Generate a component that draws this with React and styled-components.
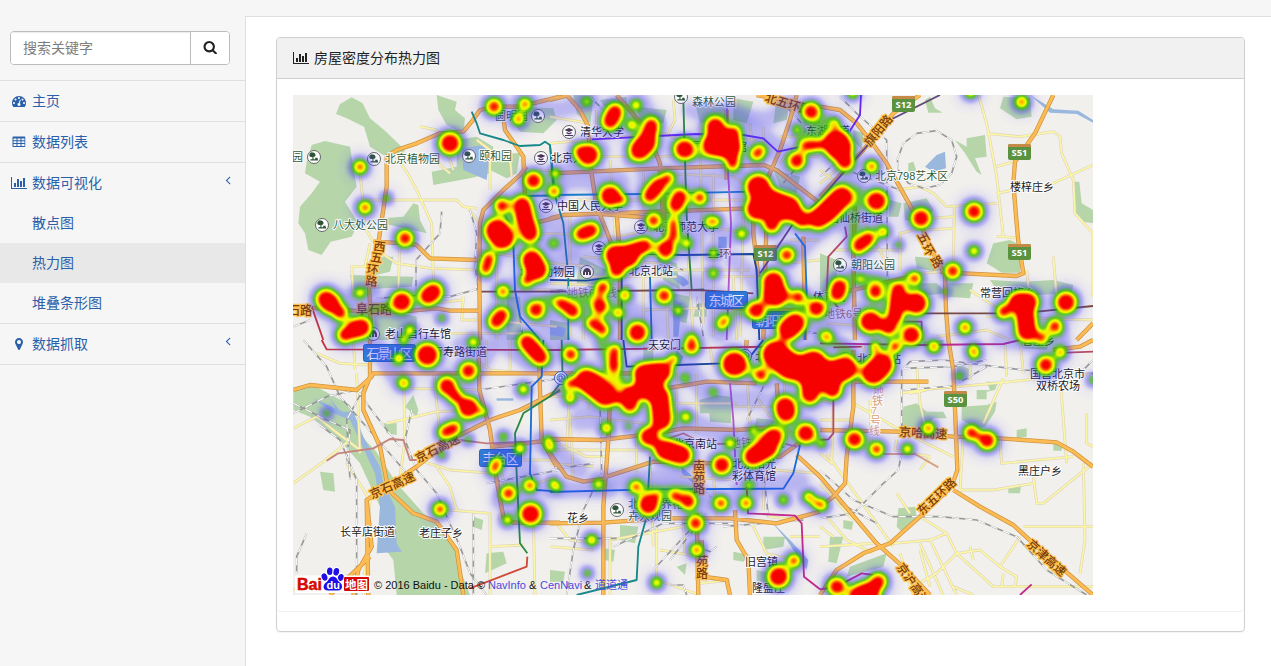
import React from 'react';
import styled, { createGlobalStyle } from 'styled-components';

const Global = createGlobalStyle`
  * { box-sizing: border-box; }
  body {
    margin: 0;
    background: #f6f6f6;
    font: 14px/20px "Liberation Sans", "Noto Sans CJK SC", sans-serif;
    color: #222;
    overflow: hidden;
  }
`;

const Page = styled.div`
  display: flex;
  height: 666px;
  padding-top: 16px;
  background: #f6f6f6;
`;
const Sidebar = styled.aside`
  width: 245px;
  flex: none;
`;
const SearchBar = styled.div`
  padding: 15px 15px 15px 10px;
  height: 65px;
  border-bottom: 1px solid #dfdfdf;
`;
const SearchGroup = styled.div`
  display: flex;
  height: 34px;
  border: 1px solid #bcbcbc;
  border-radius: 4px;
  background: #fff;
  overflow: hidden;
`;
const SearchInput = styled.input`
  flex: 1;
  min-width: 0;
  border: 0;
  outline: 0;
  padding: 0 12px;
  font: 14px "Liberation Sans", "Noto Sans CJK SC", sans-serif;
  box-shadow: inset 0 1px 1px rgba(0, 0, 0, 0.08);
  &::placeholder { color: #7d7d7d; opacity: 1; }
`;
const SearchButton = styled.button`
  width: 39px;
  padding: 0 0 2px;
  border: 0;
  border-left: 1px solid #bcbcbc;
  background: #fff;
  color: #222;
  display: flex;
  align-items: center;
  justify-content: center;
`;
const NavGroup = styled.div`
  border-bottom: 1px solid #dfdfdf;
`;
const NavItem = styled.a`
  display: flex;
  align-items: center;
  height: 40px;
  padding: 0 10px 0 ${(p) => (p.$sub ? 32 : 10)}px;
  color: #2a60aa;
  background: ${(p) => (p.$active ? '#e8e8e8' : 'transparent')};
`;
const NavIcon = styled.span`
  width: 18px;
  margin-right: 4px;
  display: flex;
  justify-content: center;
`;
const Arrow = styled.span`
  margin-left: auto;
  display: flex;
  padding-bottom: 6px;
`;
const Main = styled.main`
  flex: 1;
  background: #fff;
  border: solid #dfdfdf;
  border-width: 1px 0 0 1px;
  padding: 20px 26px 0 30px;
`;
const Panel = styled.section`
  height: 595px;
  border: 1px solid #d0d0d0;
  border-radius: 4px;
  box-shadow: 0 1px 1px rgba(0, 0, 0, 0.05);
  overflow: hidden;
`;
const PanelHeading = styled.header`
  display: flex;
  align-items: center;
  gap: 5px;
  height: 41px;
  padding: 0 16px;
  background: #f1f1f1;
  border-bottom: 1px solid #d0d0d0;
`;
const PanelBody = styled.div`
  height: 533px;
  padding: 16px;
  border-bottom: 1px solid #f0f0f0;
  border-radius: 0 0 4px 4px;
`;
const MapSvg = styled.svg`
  display: block;
  font-family: "Liberation Sans", "Noto Sans CJK SC", sans-serif;
`;

const ICONS = {
  dash: [1792, 'M384 1152q0-53-37.5-90.5t-90.5-37.5-90.5 37.5-37.5 90.5 37.5 90.5 90.5 37.5 90.5-37.5 37.5-90.5zm192-448q0-53-37.5-90.5t-90.5-37.5-90.5 37.5-37.5 90.5 37.5 90.5 90.5 37.5 90.5-37.5 37.5-90.5zm428 481l101-382q6-26-7.5-48.5t-38.5-29.5-48 6.5-30 39.5l-101 382q-60 5-107 43.5t-63 98.5q-20 77 20 146t117 89 146-20 89-117q16-60-6-117t-72-91zm660-33q0-53-37.5-90.5t-90.5-37.5-90.5 37.5-37.5 90.5 37.5 90.5 90.5 37.5 90.5-37.5 37.5-90.5zm-640-640q0-53-37.5-90.5t-90.5-37.5-90.5 37.5-37.5 90.5 37.5 90.5 90.5 37.5 90.5-37.5 37.5-90.5zm448 192q0-53-37.5-90.5t-90.5-37.5-90.5 37.5-37.5 90.5 37.5 90.5 90.5 37.5 90.5-37.5 37.5-90.5zm320 448q0 261-141 483-19 29-54 29h-1402q-35 0-54-29-141-221-141-483 0-182 71-348t191-286 286-191 348-71 348 71 286 191 191 286 71 348z'],
  chart: [2048, 'M640 896v512h-256v-512h256zm384-512v1024h-256v-1024h256zm1024 1152v128h-2048v-1536h128v1408h1920zm-640-896v768h-256v-768h256zm384-384v1152h-256v-1152h256z'],
  marker: [1792, 'M1152 640q0-106-75-181t-181-75-181 75-75 181 75 181 181 75 181-75 75-181zm256 0q0 109-33 179l-364 774q-16 33-47.5 52t-67.5 19-67.5-19-46.5-52l-365-774q-33-70-33-179 0-212 150-362t362-150 362 150 150 362z'],
  search: [1792, 'M1216 832q0-185-131.5-316.5t-316.5-131.5-316.5 131.5-131.5 316.5 131.5 316.5 316.5 131.5 316.5-131.5 131.5-316.5zm512 832q0 52-38 90t-90 38q-54 0-90-38l-343-342q-179 124-399 124-143 0-273.5-55.5t-225-150-150-225-55.5-273.5 55.5-273.5 150-225 225-150 273.5-55.5 273.5 55.5 225 150 150 225 55.5 273.5q0 220-124 399l343 343q37 37 37 90z'],
  angle: [1792, 'M1203 544q0 13-10 23l-393 393 393 393q10 10 10 23t-10 23l-50 50q-10 10-23 10t-23-10l-466-466q-10-10-10-23t10-23l466-466q10-10 23-10t23 10l50 50q10 10 10 23z'],
  table: [1792, 'M64 288q0-96 96-96h1440q96 0 96 96v1152q0 96-96 96h-1440q-96 0-96-96zM192 448v224h384v-224zM704 448v224h384v-224zM1216 448v224h384v-224zM192 800v224h384v-224zM704 800v224h384v-224zM1216 800v224h384v-224zM192 1152v256h384v-256zM704 1152v256h384v-256zM1216 1152v256h384v-256z'],
};
const Icon = ({ name, size = 14 }) => {
  const [w, d] = ICONS[name];
  return (
    <svg width={(size * w) / 1792} height={size} viewBox={`0 0 ${w} 1792`} fill="currentColor" fillRule={name === 'table' ? 'evenodd' : 'nonzero'}>
      <path d={d} />
    </svg>
  );
};

/* Map tiles: coordinates inside each tile are at three units per pixel. */
const TILES = [
  {
    x: 290, y: 90,
    parks: ['138,72 150,42 185,22 218,40 240,85 285,122 345,180 330,205 280,195 240,170 222,110 170,85', '50,215 65,165 105,153 180,170 200,290 165,335 205,400 185,440 122,455 95,495 55,480 45,430 25,400 30,350 65,310 90,275 45,250', '440,15 500,35 495,60 525,85 520,130 470,105 445,60', '690,50 790,55 800,90 760,130 690,125 665,90', '600,190 690,190 680,250 650,265 600,240', '500,150 560,140 610,170 600,250 540,265 430,285 425,245 500,230', '370,340 385,345 390,390 410,430 300,405 265,400 275,385 340,380', '180,555 370,560 365,590 190,600', '250,500 310,500 300,545 235,560', '650,620 690,620 700,750 650,750', '250,670 310,665 380,680 380,750 260,750'],
    water: ['515,175 580,165 598,200 590,270 520,240', '660,400 700,395 750,410 750,450 665,450', '690,60 720,55 710,90 690,90'],
    minor: ['390,110 440,120 480,210 490,240', '210,240 218,330 225,415 250,455', '310,190 350,245 380,300 425,400 430,560 440,600', '218,330 500,330 520,350 560,355', '330,460 325,600 320,640', '190,620 185,530 225,530 240,460', '440,200 450,225 480,250', '600,300 600,180 560,150', '530,350 570,400', '260,480 320,520 420,535 570,540', '620,350 620,750', '520,620 515,690 570,690', '240,640 235,750', '690,600 800,600', '560,480 800,520', '570,440 800,430', '420,640 520,630', '430,730 700,730', '700,320 810,315', '750,240 810,245', '590,690 800,710', '660,200 665,260'],
    main: ['10,650 190,662 330,665 440,655 480,662 570,662', '245,750 240,640 235,560 265,460 290,290 290,200 320,180 380,160 450,130 520,125 545,95 570,60 615,50 690,50 810,20', '250,455 350,460 380,465 420,505 560,510 620,490', '570,750 568,560 570,400 580,360 640,300 690,255 710,230', '638,65 645,120 680,170 700,200 705,320', '700,320 730,400 810,380'],
    rail: ['378,610 378,510 450,430 455,365', '540,360 560,430 555,520 565,600', '260,625 400,615 480,620 570,595', '10,710 60,690', '680,620 700,750'],
    subway: [['#16888a', '545,65 560,100 570,130 640,150 690,168 750,165 765,155 780,165 795,310 810,320'], ['#1470d8', '640,370 665,410 670,460 675,600 690,680 750,750'], ['#c33540', '65,650 100,750'], ['#7a4a3c', '575,605 810,605'], ['#1680b8', '650,345 700,318 810,316']],
  },
  {
    x: 290, y: 340,
    parks: ['10,145 60,130 180,195 215,290 255,330 320,430 400,520 450,560 500,620 515,700 540,765 320,765 310,660 265,600 270,500 210,370 140,290 60,230 10,210', '90,395 130,400 135,455 100,450', '280,250 320,250 320,285 290,280', '370,165 385,210 380,230 345,200', '550,530 580,540 575,570 550,560', '590,640 640,635 650,670 585,700'],
    water: ['70,175 160,215 190,215 220,290 270,380 280,430 315,500 320,610 335,635 260,640 270,500 255,400 180,240 130,220', '620,175 670,175 670,182 620,182', '115,170 165,230 150,225'],
    minor: ['10,265 80,230 130,270 210,330', '10,430 100,365 180,300', '170,370 240,480 220,765', '340,90 345,300 330,410', '360,145 560,150', '290,250 440,215 560,210', '380,360 450,380 480,390 610,400', '440,380 480,440 500,510', '480,510 600,520 600,765', '80,40 150,70 240,75', '200,100 210,340', '560,60 600,90 720,100', '600,620 700,615', '630,420 630,540', '620,470 800,410', '590,0 590,80', '430,90 450,280', '600,290 650,450', '10,750 200,700', '700,360 800,360', '660,0 660,90', '730,540 735,765', '190,0 195,90'],
    main: ['10,150 60,135 200,150 245,110 250,100 810,100', '240,0 240,110 220,160 220,210 270,320 295,450 370,520 440,545 500,630 520,765', '190,765 205,690 245,620 230,480 380,380 480,300 600,240 690,210 810,150', '565,0 568,150 600,270 620,420 640,530 670,548 810,548', '745,0 755,300 800,380', '610,320 810,298', '120,765 240,650', '230,480 235,765'],
    rail: ['40,0 110,80 150,170 290,330 350,400', '10,190 110,240 180,270 170,370', '90,255 150,300 200,420 200,765', '365,210 345,300 380,390 440,460 510,620 540,700 590,765', '10,220 110,170 200,150 260,230 330,320', '50,580 20,650 20,700', '240,110 170,240 180,420', '565,150 810,115', '590,430 700,410 810,390', '550,520 550,765'],
    subway: [['#c33540', '95,0 110,28 810,30'], ['#c8827c', '110,362 145,340 250,325 300,297 340,300 360,360 380,360'], ['#c8827c', '510,300 590,310 720,305'], ['#2b8a3c', '810,150 700,220 675,280 680,400 690,610 712,640'], ['#cf4b38', '712,650 710,680 540,745'], ['#1670d0', '760,0 755,110 725,140 720,400 740,450 810,455']],
  },
  {
    x: 550, y: 90,
    parks: ['70,15 130,20 120,110 80,70', '150,30 230,20 230,50 170,60', '260,50 350,60 340,100 270,90', '430,20 530,50 530,80 450,100', '550,25 610,35 590,100 550,90', '680,20 720,30 710,90 670,100', '670,240 750,260 740,310 690,290', '320,500 380,520 390,600 340,570', '370,610 420,620 410,700 370,690', '0,690 60,700 60,750 0,750', '760,40 810,40 810,130 760,130', '440,640 470,640 470,680 430,680', '90,500 170,540 140,600 80,580'],
    water: ['345,540 400,560 420,580 400,590 350,550', '370,630 395,640 385,740 370,740', '505,440 530,440 530,490 505,490', '0,705 50,715 40,740 0,735'],
    minor: ['0,160 340,130 500,190', '20,200 350,200 500,170', '370,30 375,90 350,140', '140,60 140,230', '80,330 600,330', '180,210 200,500', '280,240 280,700', '320,250 550,260 610,300', '450,100 460,700', '0,430 200,440 400,400 600,430', '340,540 600,540', '490,250 490,740', '520,560 620,560', '430,150 620,150', '600,100 610,200', '100,500 330,520', '60,380 60,740', '100,560 380,560', '280,660 600,650', '580,380 570,740', '640,110 640,230', '730,130 780,200 810,200', '720,450 810,450', '700,520 810,510', '0,520 130,530', '350,640 355,750', '0,80 120,100', '400,260 430,750', '550,560 560,750', '690,140 810,140', '690,220 760,130', '0,580 240,590', '100,650 100,750'],
    main: ['50,15 90,60 115,110 120,220 140,350 180,450 210,560 210,750', '0,250 120,245 330,235 640,225 680,240 810,340', '200,15 290,120 330,220 340,400', '0,385 40,375 600,355 640,370', '340,230 345,500', '740,15 720,90 690,180 655,260 610,360 610,430 625,560', '620,15 700,30 760,50', '130,370 320,385 340,430', '0,30 60,15', '200,370 210,500', '530,60 530,270', '650,380 640,750', '760,440 765,750', '470,650 650,660 810,660'],
    rail: ['120,20 170,70', '0,600 180,600', '330,520 400,540', '440,620 460,740', '700,40 810,160', '800,160 700,280', '610,700 800,730'],
    subway: [['#6a24f0', '125,148 320,138 440,132 580,135 640,145 683,185 755,170'], ['#2b8a3c', '400,30 403,140 410,380 425,600 462,598'], ['#1680c8', '0,315 280,312 600,305 690,308'], ['#18478f', '0,570 110,572 200,560 240,490 400,495 610,492 620,540 628,750'], ['#b85ac8', '530,15 535,260 543,400 530,750'], ['#16888a', '0,165 10,300 40,400 55,560 55,750'], ['#604878', '810,330 730,400 630,550'], ['#7a4a3c', '0,605 440,600 610,610'], ['#1a70c0', '300,560 305,750'], ['#1680d8', '735,430 765,470 770,610 765,750'], ['#18478f', '215,560 215,750']],
  },
  {
    x: 550, y: 340,
    parks: ['448,180 500,165 543,170 543,250 480,245 478,220 450,220', '210,555 265,560 255,610 210,600', '640,590 705,590 700,620 640,630', '550,635 600,645 580,665 550,660', '0,690 45,695 40,725 0,725', '280,20 310,20 310,60 280,60', '620,235 680,240 650,280 610,280', '160,625 195,630 190,665 165,660', '380,680 410,670 405,705', '620,690 660,700 650,740 620,730', '600,370 650,350 660,390 600,400', '250,490 300,520 350,500 340,540 250,535'],
    water: ['395,380 440,420 480,470 490,475 430,430 395,400', '340,140 370,180 360,185', '660,540 720,600 775,660 770,690 710,600', '380,30 400,50 390,75 370,60'],
    minor: ['0,240 120,230 280,250', '60,130 50,320', '0,330 320,330', '110,80 115,210', '380,100 380,260', '340,190 560,190', '440,100 440,280', '340,370 500,380 560,360', '0,300 110,350 170,350', '260,270 260,400', '620,170 660,230 740,290', '550,200 700,200', '330,300 470,300', '490,400 500,540', '320,560 320,720 450,765', '0,620 130,630', '480,20 490,80', '590,100 600,250', '450,730 540,720', '180,590 180,765', '400,540 405,640', '330,630 450,650', '180,600 400,560', '650,530 760,540', '720,590 810,590', '0,370 130,380', '60,220 70,420', '0,170 60,170 170,200 280,200', '390,410 560,420', '300,340 310,620', '640,340 640,510', '700,60 710,300', '600,540 650,640 730,660', '20,550 60,600 150,610', '670,390 810,400'],
    main: ['0,297 150,300 320,280 400,265 560,270 700,260', '0,550 160,548 340,535 540,535 680,550 810,515', '180,180 175,300 160,500 160,765', '170,410 310,365 500,370 690,350 760,300', '0,340 50,410 100,425 170,415', '320,150 470,125 620,130', '555,510 560,600 595,660 600,765', '455,600 460,710 530,720 540,765', '680,130 690,250', '740,345 810,410', '590,0 585,80', '440,520 445,765', '0,100 250,100'],
    rail: ['50,765 70,630 100,510 155,400', '0,390 130,370', '150,190 155,400', '650,120 590,240', '310,690 420,570', '360,660 470,520', '640,390 655,530', '500,620 480,635 455,625', '190,620 340,550 560,550', '0,595 200,595', '520,560 760,540', '360,735 400,735 410,765'],
    subway: [['#c33540', '0,30 380,25 650,20 810,45'], ['#18478f', '220,0 230,80 380,75 520,70 600,50 640,0'], ['#1470d8', '0,456 300,448 700,446 730,400 750,315'], ['#b85ac8', '540,130 550,240 558,400 560,435'], ['#16888a', '300,350 295,440 290,530 265,620 260,720 80,765'], ['#c52a87', '590,440 594,520 735,527 755,550 762,710 810,748'], ['#c8827c', '340,300 400,280 440,300 500,312 600,310 700,310 740,320'], ['#2b8a3c', '35,0 38,120 0,170'], ['#b54c6c', '765,50 780,180']],
  },
  {
    x: 820, y: 90,
    parks: ['330,20 345,55 368,68 325,68 315,30', '550,20 630,25 635,80 590,88 540,55', '405,150 440,170 440,145 495,135 500,200 465,205 485,255 470,245 435,190', '570,450 600,465 600,548 545,548 500,520 520,460', '760,275 778,275 785,340 819,360 819,400 790,395 765,370', '250,340 320,325 340,360 320,400 255,390', '285,500 350,505 370,535 350,545 290,535', '510,570 610,575 700,570 760,585 755,610 650,615 530,600', '270,580 350,580 380,610 280,620', '0,490 50,510 50,600 0,620', '100,120 130,130 125,180 100,150', '210,330 245,340 235,380 205,380', '375,580 460,580 450,625 380,620', '265,220 280,215 290,245 265,245'],
    water: ['315,230 350,195 375,185 378,235 340,245', '630,15 700,58 775,62 819,90 819,98 770,72 690,68'],
    minor: ['475,15 500,100 530,260 550,440 600,445', '500,130 600,140 700,125 720,140 725,190 760,270 765,370 819,430', '530,230 580,215', '610,300 700,280 819,225', '530,310 580,300', '230,300 300,290 340,310 380,350 530,340', '403,350 400,530', '330,385 400,380', '320,420 400,415', '240,540 240,430 300,415', '620,540 625,590', '0,280 100,200', '0,240 80,300', '120,370 200,520', '250,555 360,545', '100,620 120,720', '0,190 80,240', '40,480 250,480', '350,740 500,720 570,750', '500,680 819,690', '20,700 300,720', '550,440 530,440', '450,600 600,700', '0,100 50,80', '700,500 720,740', '819,430 819,620'],
    main: ['0,50 60,60 110,100 150,150 200,220 250,310 300,400 340,490 375,555 378,660 385,750', '700,15 645,130 585,215 580,280 590,400 595,455 610,550 590,558 430,550 360,545', '300,15 220,70 130,180 0,320', '105,350 100,500 105,750', '0,610 100,600 270,560', '770,750 819,700'],
    rail: ['60,20 110,70 200,150 203,720', '232,210 250,160 290,130 350,122 395,150 410,200 395,250 360,285 310,295 265,280 235,240 232,205', '0,260 90,180', '80,240 240,300'],
    subway: [['#6a24f0', '123,15 120,75 85,130'], ['#604878', '360,15 210,90 50,270 0,330'], ['#7a4a3c', '130,670 600,670 819,648'], ['#b54c6c', '75,410 80,440 25,500 20,610 60,660'], ['#b54c6c', '180,695 305,695 305,750']],
  },
  {
    x: 820, y: 340,
    parks: ['470,150 510,150 500,125 535,125 525,150 500,155 500,178 470,178', '425,200 500,195 530,185 525,215 495,260 470,265 425,240', '250,200 290,190 320,215 370,215 380,235 340,235 325,260 245,265', '590,270 620,265 620,290 590,295', '700,312 730,312 725,332 700,332', '565,440 603,440 600,460 565,460', '235,505 285,500 290,530 245,575 230,560', '70,540 100,545 95,570 70,565', '30,590 70,590 50,670 25,665', '90,680 200,640 190,680 80,710', '310,5 370,0 370,25 310,20', '600,0 690,0 680,30 610,25', '410,70 455,90 450,120 410,120'],
    water: [],
    minor: ['100,190 240,270 400,350', '0,180 40,190 35,370 0,340', '290,80 300,190 320,280', '240,160 300,150 520,130 819,100', '720,110 740,370', '555,10 560,110', '550,115 490,250', '420,450 520,450 640,430', '430,280 420,450', '540,300 545,370 760,350', '640,410 650,490 670,490 819,370', '610,560 819,560', '790,370 795,600 780,700', '600,590 540,680', '300,530 380,580 410,640 520,740 819,740', '410,640 480,630 540,680 590,710 585,740', '220,610 330,600 380,580', '240,640 280,765', '300,610 370,765', '330,600 410,765', '280,740 350,700 410,640', '450,620 460,660', '400,740 460,765', '20,530 80,600 160,640', '20,340 220,620', '0,430 100,540', '230,460 270,520', '130,10 140,120', '0,620 160,610', '0,560 40,590', '545,740 550,700', '450,20 450,120', '330,350 300,390', '300,630 330,740', '0,100 100,95', '0,240 100,240', '800,220 800,310 819,320', '230,300 225,330 330,350', '270,160 320,150', '600,0 610,100', '150,180 155,350'],
    main: ['385,0 400,90 408,280 412,390 395,440 300,530 210,610 130,640 50,690 0,765', '0,270 230,275 400,290 540,295 710,307 760,335 819,380', '0,410 60,480 170,610 260,690 330,765', '400,450 480,500 580,555 640,610 819,765', '100,30 100,200 80,350 75,430 40,470 0,500', '100,125 325,125', '700,30 780,20 819,0'],
    rail: ['245,290 245,90 270,65 370,60 610,90 819,100', '250,150 400,138 500,80', '0,390 100,480 220,530 360,530 470,540 590,590 680,690 800,765', '245,340 235,390 190,430 100,520 0,535', '250,85 400,80 500,60', '780,100 819,60', '60,490 170,550'],
    subway: [['#c52a87', '0,10 300,15 550,12 600,0'], ['#c52a87', '0,748 50,740 125,700 160,705'], ['#c52a87', '600,765 635,733'], ['#b54c6c', '40,180 40,280 25,298 0,300'], ['#b54c6c', '740,38 819,35'], ['#c33540', '40,22 125,20'], ['#d9a080', '190,342 285,342 355,382']],
  },
];

/* Heat strokes per tile: [radius, points]. */
const HEAT = [
  [[37, '480,160'], [28, '612,50'], [21, '705,42'], [21, '685,88'], [23, '210,231'], [23, '225,353'], [29, '345,445'], [31, '730,272'], [22, '792,305'], [26, '635,347'], [32, '697,345 705,390 720,430'], [42, '620,422 637,443'], [23, '597,505 587,538'], [37, '725,510 742,540'], [22, '710,572'], [35, '108,628 120,640'], [26, '150,668'], [36, '335,635'], [33, '415,618 430,605'], [34, '215,712 195,718'], [28, '165,735'], [22, '638,605'], [28, '635,675 618,695'], [30, '737,660'], [16, '210,608'], [12, '290,325'], [12, '455,685'], [17, '360,720'], [14, '790,460']],
  [[40, '412,45'], [18, '327,55'], [15, '340,0'], [20, '342,130'], [30, '535,92'], [32, '470,138'], [24, '495,168'], [36, '535,203'], [24, '465,277 492,265'], [30, '710,5 752,52'], [18, '700,148'], [17, '550,5'], [11, '110,220'], [20, '620,370 612,388'], [18, '690,325'], [26, '655,460'], [22, '720,437'], [37, '722,522'], [24, '450,508'], [17, '652,540'], [14, '775,300'], [12, '455,345'], [11, '535,300'], [13, '640,290'], [14, '580,215'], [15, '790,430']],
  [[30, '195,65 180,95'], [17, '258,45'], [17, '245,105'], [28, '305,105 292,155'], [36, '290,158 268,180'], [38, '115,195'], [26, '92,185'], [36, '403,178'], [34, '495,110'], [40, '490,165 540,170'], [26, '550,130 548,170'], [23, '548,170 548,222'], [23, '628,184 620,192'], [31, '783,65'], [20, '765,168 800,165'], [30, '740,213'], [22, '353,265'], [27, '325,285 298,318'], [37, '180,318'], [20, '215,330'], [28, '390,320 378,345'], [24, '450,323'], [26, '310,392'], [28, '125,420 95,432'], [18, '480,395 496,395'], [17, '575,432'], [18, '370,395 372,440'], [32, '347,478'], [27, '285,467 215,490'], [38, '195,495 235,500'], [29, '200,540'], [16, '410,460'], [27, '710,495'], [16, '490,490'], [16, '490,550'], [28, '342,617'], [42, '625,290'], [38, '620,358'], [43, '660,335 715,355'], [28, '665,405'], [26, '740,370 755,393'], [36, '805,385'], [38, '670,575'], [44, '675,612'], [31, '618,662'], [24, '745,620'], [31, '800,655'], [37, '735,700 715,718'], [25, '158,592'], [20, '225,615'], [28, '150,648'], [22, '30,640 55,655'], [27, '68,665'], [18, '205,668'], [21, '125,700 160,720'], [35, '262,728'], [18, '525,690 515,703'], [16, '385,662'], [16, '15,250'], [14, '740,118'], [16, '425,745'], [14, '110,35']],
  [[27, '62,43'], [20, '195,30 192,60'], [24, '192,78'], [26, '425,20'], [18, '370,58'], [40, '110,120 165,165'], [20, '60,130'], [18, '60,175'], [28, '240,160 240,195'], [36, '280,100 335,95'], [45, '300,120 295,140'], [35, '330,170 335,240'], [33, '295,290'], [36, '345,330 395,345'], [19, '170,265'], [17, '408,230'], [45, '553,72'], [25, '632,105'], [46, '675,42 720,80 790,90'], [32, '780,140 780,165'], [37, '705,200 708,215'], [34, '768,280'], [33, '515,375'], [33, '670,290 650,320'], [34, '655,325 608,350'], [14, '610,270'], [17, '540,310'], [21, '258,440'], [16, '145,432'], [36, '295,495'], [18, '320,470'], [28, '415,485'], [22, '375,470'], [28, '437,550'], [22, '440,630'], [24, '513,490'], [22, '588,490'], [14, '597,435'], [19, '125,600'], [18, '320,728'], [37, '685,710'], [23, '732,662'], [18, '775,470'], [17, '800,490'], [15, '700,480'], [15, '20,440'], [12, '112,700'], [13, '405,115'], [12, '490,155'], [10, '235,260'], [19, '200,175'], [16, '0,320']],
  [[46, '50,160 57,170'], [30, '75,215'], [22, '155,230'], [37, '170,333'], [38, '65,320 15,370'], [34, '303,385'], [31, '462,365'], [26, '145,445 115,470'], [18, '190,425'], [18, '462,483'], [28, '398,543'], [22, '605,36'], [20, '452,5'], [18, '98,8'], [31, '58,590 53,610'], [23, '285,565'], [28, '165,605'], [27, '235,600 225,680'], [39, '290,640'], [38, '150,695'], [34, '275,735'], [30, '205,710'], [22, '435,713'], [35, '595,635 625,635'], [25, '550,665'], [34, '617,680 620,725'], [25, '705,708'], [20, '665,745'], [36, '738,637'], [15, '45,100'], [11, '235,465'], [11, '375,605'], [12, '120,570'], [20, '20,740']],
  [[42, '20,105 75,85'], [46, '-20,70 -10,110'], [31, '38,150'], [41, '185,75 160,100'], [22, '225,20'], [21, '342,20'], [19, '460,30 463,40'], [31, '677,75'], [19, '722,37'], [13, '418,108'], [22, '325,265'], [26, '453,278'], [31, '502,302'], [32, '103,298'], [25, '170,328'], [18, '262,327'], [31, '50,740'], [40, '120,770 145,760'], [29, '175,725'], [20, '5,495'], [14, '5,310'], [17, '165,20'], [13, '819,120']],
];

/* Diffuse density, in page pixels: [radius, opacity, points]. */
const HAZE = [
  [9, 0.1, '520,105 560,110 590,100'], [9, 0.1, '600,150 560,180 620,180'], [12, 0.09, '640,105 650,180 720,180'],
  [8, 0.1, '690,110 770,120 790,100'], [10, 0.1, '510,205 560,225 570,250'], [9, 0.1, '740,180 745,230 720,240'],
  [11, 0.1, '650,200 700,210 690,250'], [9, 0.1, '545,265 590,260'], [12, 0.1, '690,285 720,300 720,330'],
  [9, 0.1, '735,260 755,280'], [10, 0.1, '510,290 540,310 560,340'], [12, 0.1, '590,305 650,320 690,340'],
  [10, 0.1, '770,320 850,320 890,300'], [9, 0.1, '800,250 830,220 880,230'], [10, 0.1, '500,340 530,360'],
  [9, 0.11, '690,370 710,400 760,400'], [11, 0.1, '580,420 630,410'], [10, 0.11, '680,420 740,440 790,440'],
  [10, 0.1, '600,480 680,480 710,500'], [9, 0.11, '740,490 800,480'], [9, 0.11, '500,450 530,470 500,500'],
  [8, 0.1, '340,300 400,310'], [9, 0.14, '375,345 400,380'], [8, 0.11, '460,345 490,350 470,380'],
  [9, 0.1, '820,120 860,200'], [7, 0.12, '550,490 610,490'], [7, 0.1, '850,280 880,280'], [9, 0.1, '1000,340 1060,340'],
  [9, 0.1, '730,110 780,150 800,190'], [8, 0.12, '540,440 580,470'],
  [5, 0.44, '598,290 602,345 620,385'], [5, 0.36, '620,380 600,375'], [5, 0.4, '672,225 665,260'],
  [5, 0.4, '545,300 595,298'], [5, 0.36, '735,312 760,310'], [5, 0.36, '790,300 825,305'], [4, 0.4, '852,275 900,285 910,275'],
  [4, 0.33, '648,145 630,160'], [4, 0.34, '690,155 705,155'], [4, 0.34, '630,490 690,490'],
  [5, 0.36, '750,370 765,380'], [4, 0.38, '858,190 852,240'], [5, 0.3, '800,140 830,120'],
  [4, 0.33, '560,390 580,385'], [5, 0.34, '1030,335 1060,330'], [5, 0.34, '820,335 850,350'], [4, 0.34, '370,310 400,305'],
  [4, 0.33, '355,292 375,290'], [5, 0.3, '755,440 785,430'],
];

/* Labels under the heat layer: [text, x, baseline, colour]. */
const LABELS = [
  ['园', 292, 161, 'g'], ['北京植物园', 385, 163, 'g'], ['颐和园', 479, 160, 'g'], ['八大处公园', 333, 229, 'g'], ['圆明园', 495, 120, 'g'],
  ['清华大学', 580, 136], ['北京大学', 551, 162], ['中国人民大学', 557, 210], ['北京动物园', 520, 276], ['北京师范大学', 653, 231], ['北京北站', 629, 275],
  ['森林公园', 692, 106, 'g'], ['国家体育馆', 692, 151], ['北方交通大学', 610, 252], ['地铁6号线', 567, 297, 'r'], ['二环', 708, 258, 'b'],
  ['东湖街道', 806, 135], ['酒仙桥街道', 828, 222], ['北京798艺术区', 875, 180, 'g'], ['朝阳公园', 851, 269, 'g'], ['楼梓庄乡', 1010, 191],
  ['常营回族乡', 980, 297], ['地铁6号线', 824, 318, 'r'], ['体育场', 813, 301], ['老山自行车馆', 385, 338],
  ['万寿路街道', 432, 356], ['长辛店街道', 340, 536], ['老庄子乡', 419, 537], ['花乡', 567, 522], ['天安门', 648, 349], ['北京西站', 571, 382],
  ['北京南站', 673, 448], ['地铁七号线', 730, 447, 'r'], ['北京阳光', 732, 468], ['彩体育馆', 732, 480], ['北京世界花', 628, 508, 'g'], ['卉大观园', 628, 520, 'g'],
  ['旧宫镇', 745, 566], ['隆盛庄', 752, 592], ['国营北京市', 1030, 378], ['双桥农场', 1036, 390], ['黑庄户乡', 1018, 475], ['管庄乡', 1022, 345],
  ['北京东站', 857, 363], ['北京站', 755, 361],
];
const TONES = { g: '#2f5c35', b: '#7b4a12', r: '#a97664', k: '#181818' };
const ROAD_NAMES = [
  ['西', 373, 250, 8], ['五', 370, 261, 8], ['环', 366, 273, 8], ['路', 365, 285, 5], ['南', 693, 471], ['苑', 693, 482], ['路', 693, 493],
  ['苑', 696, 566], ['路', 696, 578], ['五', 917, 235, 60], ['环', 922, 247, 60], ['路', 930, 259, 60], ['北五环路', 764, 101, 17], ['京石高速', 418, 463, -27], ['京石高速', 372, 499, -24],
  ['京哈高速', 899, 436, 3], ['东五环路', 922, 516, -43], ['京津高速', 1026, 545, 42], ['京沪高速', 896, 567, 55],
  ['旗阳路', 870, 147, -50], ['阜石路', 356, 314], ['石路', 288, 315],
];
const DISTRICTS = [['石景山区', 363, 344, 53], ['东城区', 705, 291, 43], ['丰台区', 479, 449, 43], ['朝阳区', 752, 311, 42]];
const SHIELDS = [['S12', 892, 96], ['S12', 754, 245], ['S51', 1008, 144], ['S51', 1008, 244], ['S50', 944, 391]];
const POIS = [['tree', 314, 157], ['tree', 374, 159], ['tree', 469, 156], ['tree', 322, 225], ['tree', 538, 116], ['school', 541, 158], ['school', 569, 132], ['school', 546, 206], ['school', 641, 227], ['school', 599, 248], ['zoo', 587, 272], ['tree', 681, 97], ['tree', 864, 176], ['tree', 840, 265], ['tree', 617, 510], ['zoo', 373, 334], ['metro', 561, 378], ['metro', 845, 359], ['metro', 745, 356]];

/* Density to colour: [position, r, g, b]. */
const STOPS = [[0, 0.3, 0.25, 1], [0.2, 0.25, 0.22, 0.95], [0.35, 0.12, 0.5, 0.2], [0.52, 0.25, 0.75, 0], [0.7, 0.92, 1, 0], [0.82, 1, 0.82, 0], [0.92, 1, 0.35, 0], [1, 0.97, 0, 0]];
const ramp = (c) =>
  Array.from({ length: 51 }, (_, i) => {
    const t = i / 50;
    const k = Math.max(1, STOPS.findIndex((s) => s[0] >= t));
    const a = STOPS[k - 1];
    const b = STOPS[k];
    return (a[c] + ((b[c] - a[c]) * (t - a[0])) / (b[0] - a[0])).toFixed(3);
  }).join(' ');

const tileTransform = (t) => `translate(${t.x} ${t.y}) scale(.33333)`;
const path = (pts) => (pts.includes(' ') ? `M${pts.replace(/ /g, ' L')}` : `M${pts}h.1`);

const RoadLayer = ({ kind, color, width, dash }) => (
  <g fill="none" stroke={color} strokeWidth={width} strokeLinejoin="round" strokeDasharray={dash}>
    {TILES.map((t, i) => (
      <path key={i} transform={tileTransform(t)} d={t[kind].map(path).join(' ')} />
    ))}
  </g>
);

const Poi = ({ kind, x, y }) => (
  <g transform={`translate(${x} ${y})`}>
    <circle r="6.5" fill="#fff" stroke={kind === 'metro' ? '#2860b8' : '#666'} strokeWidth="1" />
    {kind === 'tree' && <path fill="#2d5535" d="M-1-4.5a2.4 2.4 0 0 1 1.7 4.2H-.5V2.2H1.2V.8H3.6V2.2H4V3.4H-3.6V2.2H-1.6V0H-3.2A2.2 2.2 0 0 1-1-4.5" />}
    {kind === 'school' && <path fill="#4a3652" d="M-4.5-2 0-4 4.5-2 0 0zM-2.5 0 0 1 2.5 0V1.5L0 2.5-2.5 1.5zM-4 3H4V4H-4z" />}
    {kind === 'zoo' && <path fill="#493c36" d="M-4 3V0Q-3-4 0-4T4 0V3H2V0H1V3H-1V0H-2V3z" />}
    {kind === 'metro' && <path fill="none" stroke="#2860b8" d="M3 2.5A4 4 0 1 1 4 0V1H1V-2H-2V2H1" />}
  </g>
);

const HeatMap = () => (
  <MapSvg width="800" height="500" viewBox="293 95 800 500">
    <defs>
      <filter id="heat" filterUnits="userSpaceOnUse" x="253" y="55" width="880" height="580" colorInterpolationFilters="sRGB">
        <feGaussianBlur in="SourceGraphic" stdDeviation="3.9" result="core" />
        <feGaussianBlur in="SourceGraphic" stdDeviation="8.5" result="halo" />
        <feComposite in="core" in2="halo" operator="arithmetic" k2=".86" k3=".3" result="density" />
        <feColorMatrix values="0 0 0 1 0  0 0 0 1 0  0 0 0 1 0  0 0 0 0 1" />
        <feComponentTransfer result="colour">
          <feFuncR type="table" tableValues={ramp(1)} />
          <feFuncG type="table" tableValues={ramp(2)} />
          <feFuncB type="table" tableValues={ramp(3)} />
        </feComponentTransfer>
        <feComponentTransfer in="density" result="cover">
          <feFuncA type="table" tableValues="0 .3 .43 .52 .64 .8 .94 1 1 1 1" />
        </feComponentTransfer>
        <feComposite in="colour" in2="cover" operator="in" />
      </filter>
    </defs>
    <rect x="293" y="95" width="800" height="500" fill="#f1f0ed" />
    {TILES.map((t, i) => (
      <g key={i} transform={tileTransform(t)}>
        {t.parks.map((p) => <polygon key={p} points={p} fill="#b6d6aa" />)}
        {t.water.map((p) => <polygon key={p} points={p} fill="#9ab8dd" />)}
      </g>
    ))}
    <RoadLayer kind="minor" color="#ddd2bd" width="8.5" />
    <RoadLayer kind="minor" color="#fcf7a5" width="5" />
    <RoadLayer kind="rail" color="#999" width="5" />
    <RoadLayer kind="rail" color="#fff" width="3.4" dash="22 18" />
    <RoadLayer kind="main" color="#cf9440" width="13" />
    <RoadLayer kind="main" color="#fdbc53" width="8.5" />
    {TILES.map((t, i) => (
      <g key={i} transform={tileTransform(t)} fill="none" strokeWidth="5.5" strokeLinejoin="round">
        {t.subway.map(([c, p]) => <path key={p} stroke={c} d={path(p)} />)}
      </g>
    ))}
    {POIS.map(([kind, x, y]) => <Poi key={`${x}-${y}`} kind={kind} x={x} y={y} />)}
    <g fontSize="11" stroke="#fff" strokeWidth="2" paintOrder="stroke" strokeLinejoin="round">
      {LABELS.map(([s, x, y, tone]) => <text key={`${s}${x}`} x={x} y={y} fill={TONES[tone || 'k']}>{s}</text>)}
    </g>
    <g fontSize="12" fontWeight="500" fill="#7a3c06" stroke="#ffc34f" strokeWidth="2.5" paintOrder="stroke" strokeLinejoin="round">
      {ROAD_NAMES.map(([s, x, y, r = 0]) => <text key={`${x}-${y}`} transform={`translate(${x} ${y}) rotate(${r})`}>{s}</text>)}
    </g>
    <g fontSize="11" fill="#dba176" stroke="#fff" strokeWidth="2" paintOrder="stroke">
      {['地', '铁', '7', '号', '线'].map((s, i) => <text key={s} x={873 - i} y={395 + i * 10}>{s}</text>)}
    </g>
    <g stroke="#2268b4" fill="#2f80d4" fontSize="13">
      {DISTRICTS.map(([s, x, y, w]) => (
        <g key={s}>
          <rect x={x + 0.5} y={y + 0.5} width={w - 1} height="17" rx="2" />
          <text x={x + w / 2} y={y + 13.5} fill="#fff" stroke="none" textAnchor="middle" textLength={w - 7}>{s}</text>
        </g>
      ))}
    </g>
    {SHIELDS.map(([s, x, y]) => (
      <g key={`${x}-${y}`}>
        <rect x={x} y={y} width="23" height="16" rx="2" fill="#5b9240" />
        <path d={`M${x} ${y + 3}v-1q0-2 2-2h19q2 0 2 2v1z`} fill="#c58a45" />
        <text x={x + 11.5} y={y + 11.5} fontSize="9.5" fontWeight="700" fill="#fff" textAnchor="middle" textLength="16" lengthAdjust="spacingAndGlyphs" fontFamily="Open Sans, sans-serif">{s}</text>
      </g>
    ))}
    <g fontSize="11">
      <text x="374" y="589" fill="#111">© 2016 Baidu - Data ©</text>
      <text x="488" y="589" fill="#4a4adb">NavInfo</text>
      <text x="529" y="589" fill="#111">&amp;</text>
      <text x="540" y="589" fill="#4a4adb">CenNavi</text>
      <text x="584" y="589" fill="#111">&amp;</text>
      <text x="595" y="589" fill="#4a4adb">道道通</text>
    </g>
    <g filter="url(#heat)" fill="none" stroke="#000" strokeLinecap="round" strokeLinejoin="round">
      {HAZE.map(([r, o, p]) => <path key={p} d={path(p)} strokeWidth={r * 2} strokeOpacity={o} />)}
      {HEAT.map((list, i) => (
        <g key={i} transform={tileTransform(TILES[i])}>
          {list.map(([r, p]) => <path key={p} d={path(p)} strokeWidth={r * 2} />)}
        </g>
      ))}
    </g>
    <g>
      <rect x="295" y="575.5" width="76" height="17.5" rx="2" fill="#fff" />
      <text x="297" y="590" fontSize="17" fontWeight="700" fill="#d60602" stroke="#d60602" strokeWidth=".5" textLength="25" lengthAdjust="spacingAndGlyphs">Bai</text>
      <g fill="#1d0fe6" stroke="#fff" strokeWidth="2" paintOrder="stroke">
        <ellipse cx="324.5" cy="577" rx="2.8" ry="3.8" transform="rotate(-20 324.5 577)" />
        <ellipse cx="329.8" cy="571.3" rx="2.8" ry="3.8" />
        <ellipse cx="336.3" cy="571.8" rx="2.8" ry="3.8" transform="rotate(12 336.3 571.8)" />
        <ellipse cx="340.7" cy="577.5" rx="2.8" ry="3.6" transform="rotate(20 340.7 577.5)" />
        <path d="M333 576.5c4 0 4 4 7 6s3 8-2 8h-10c-6 0-5-6-2-8s3-6 7-6" />
      </g>
      <text x="326.5" y="589" fontSize="11" fontWeight="700" fill="#fff">du</text>
      <rect x="344" y="577" width="25" height="14" rx="1" fill="#d60602" />
      <text x="345" y="588.5" fontSize="11.5" fontWeight="700" fill="#fff">地图</text>
    </g>
  </MapSvg>
);

const NavLink = ({ icon, label, arrow, sub, active }) => (
  <NavItem $sub={sub} $active={active}>
    {icon && <NavIcon><Icon name={icon} /></NavIcon>}
    {label}
    {arrow && <Arrow><Icon name="angle" /></Arrow>}
  </NavItem>
);

export default function App() {
  return (
    <Page>
      <Global />
      <Sidebar>
        <SearchBar>
          <SearchGroup>
            <SearchInput placeholder="搜索关键字" />
            <SearchButton><Icon name="search" size={14.5} /></SearchButton>
          </SearchGroup>
        </SearchBar>
        <NavGroup><NavLink icon="dash" label="主页" /></NavGroup>
        <NavGroup><NavLink icon="table" label="数据列表" /></NavGroup>
        <NavGroup>
          <NavLink icon="chart" label="数据可视化" arrow />
          <NavLink sub label="散点图" />
          <NavLink sub active label="热力图" />
          <NavLink sub label="堆叠条形图" />
        </NavGroup>
        <NavGroup><NavLink icon="marker" label="数据抓取" arrow /></NavGroup>
      </Sidebar>
      <Main>
        <Panel>
          <PanelHeading><Icon name="chart" />房屋密度分布热力图</PanelHeading>
          <PanelBody><HeatMap /></PanelBody>
        </Panel>
      </Main>
    </Page>
  );
}
